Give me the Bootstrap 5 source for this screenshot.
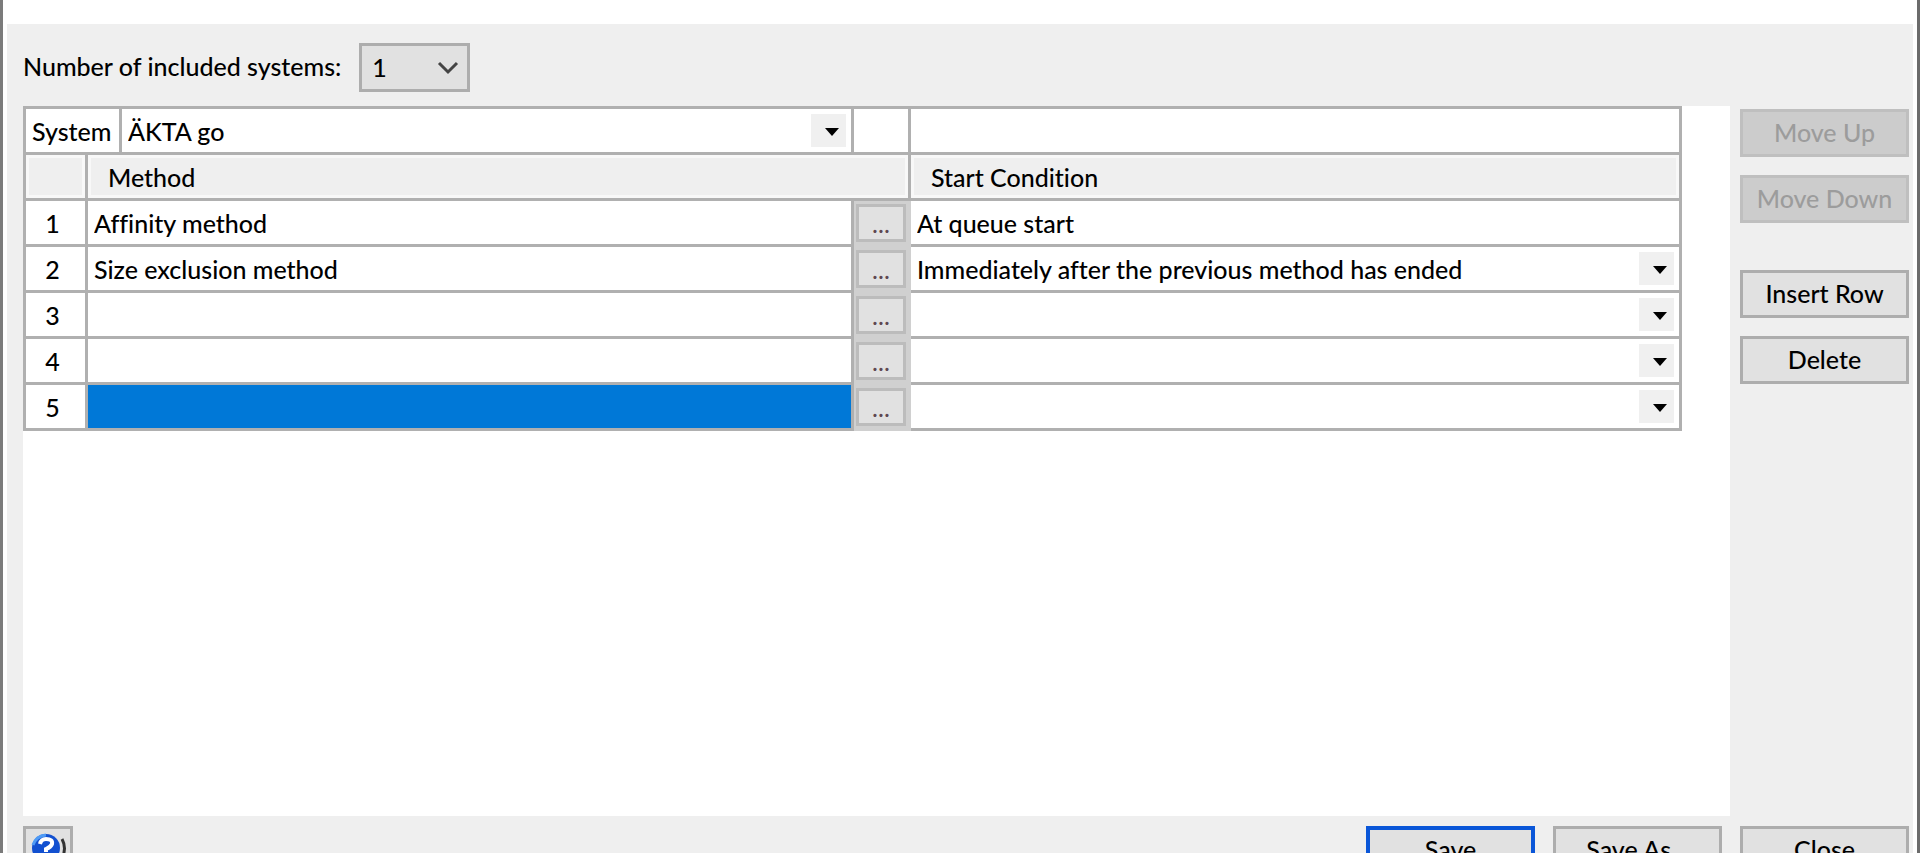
<!DOCTYPE html>
<html lang="en">
<head>
<meta charset="utf-8">
<meta name="viewport" content="width=device-width, initial-scale=1">
<title>Method queue</title>
<link href="https://cdn.jsdelivr.net/npm/bootstrap@5.3.0/dist/css/bootstrap.min.css" rel="stylesheet">
<style>
  body { font-family: Lato, "Liberation Sans", sans-serif; font-size: 25px; font-weight: 500; line-height: 32px; font-variant-ligatures: none; color: #000; background: #fff; overflow: hidden; }
  input, select, button { font-variant-ligatures: inherit; }
  .shell { min-height: calc(100vh + 21px); border-left: 3px solid #7b7b7b; border-right: 3px solid #6b6b6b; padding: 0 4px; }
  .titlebar { height: 24px; }
  .client { background: #efefef; padding: 19px 4px 0 16px; }
  .count-row { gap: 18px; margin-bottom: 14px; }
  .win-btn { height: 48px; width: 169px; padding: 0 0 2px; font-size: inherit; font-weight: inherit; line-height: 32px; color: #000; background: #e1e1e1; border: 3px solid #adadad; border-radius: 0; }
  .win-btn:disabled { color: #9c9c9c; background: #ccc; border-color: #bfbfbf; opacity: 1; }
  .win-btn.default-action { border: 4px solid #0a56d8; }
  .help-btn { width: 50px; }
  .btn-set { gap: 18px; }
  .side-set { margin-left: 10px; padding-top: 3px; }
  .edit-set { margin-top: 29px; }
  .count-select { width: 111px; height: 49px; padding: 0 10px; font-size: inherit; font-weight: inherit; color: #000; border: 3px solid #adadad; border-radius: 0;
    background: #e1e1e1 url("data:image/svg+xml,%3Csvg xmlns='http://www.w3.org/2000/svg' width='22' height='14'%3E%3Cpath d='M2 2l9 9 9-9' fill='none' stroke='%23444' stroke-width='3'/%3E%3C/svg%3E") no-repeat right 8px center / 22px 14px; }
  .panel { background: #fff; padding-right: 48px; }
  .grid-table { table-layout: fixed; width: 100%; border-collapse: collapse; }
  .grid-table th, .grid-table td { height: 46px; padding: 0; border: 3px solid #b0b0b0; font-weight: inherit; vertical-align: middle; }
  .grid-table .head th { background: #efefef; box-shadow: inset 0 0 0 3px #f8f8f8; padding: 0 0 0 20px; }
  .grid-table .row-no { text-align: center; padding: 0 6px 0 0; }
  .grid-table .sys-head { padding: 0 0 0 6px; }
  .c-num { width: 62px; } .c-sys { width: 34px; } .c-method { width: 44.2%; } .c-more { width: 57px; }
  .cell-field { display: block; width: 100%; height: 43px; padding: 0 6px; border: 0; border-radius: 0; font-size: inherit; font-weight: inherit; line-height: 32px; color: #000; background-color: transparent; appearance: none; }
  .cell-select { background: url("data:image/svg+xml,%3Csvg xmlns='http://www.w3.org/2000/svg' width='35' height='33'%3E%3Cpath fill='%23f0f0f0' d='M0 0h35v33H0z'/%3E%3Cpath d='M14 14h14l-7 8z'/%3E%3C/svg%3E") no-repeat right 5px center / 35px 33px; }
  .picked { background: #0078d7; }
  .grid-table td.more { background: #d0d0d0; border-color: #d0d0d0; }
  .more-btn { display: block; width: 50px; height: 38px; margin: 0 auto; padding: 0; border: 3px solid #bcbcbc; background: #e1e1e1; color: #5d4850; line-height: 32px; }
  .footer-row { padding-top: 10px; }
</style>
</head>
<body>
<div class="shell d-flex flex-column">
  <header class="titlebar"></header>
  <main class="client flex-grow-1 d-flex flex-column">
    <div class="count-row d-flex align-items-center">
      <label for="count" class="pb-1">Number of included systems:</label>
      <select id="count" class="count-select form-select"><option>1</option><option>2</option></select>
    </div>
    <div class="d-flex flex-grow-1">
      <section class="panel flex-grow-1">
        <table class="grid-table">
          <colgroup><col class="c-num"><col class="c-sys"><col class="c-method"><col class="c-more"><col></colgroup>
          <tbody>
            <tr><th colspan="2" class="sys-head"><label for="system">System</label></th><td><select id="system" class="cell-field cell-select"><option>ÄKTA go</option></select></td><td></td><td></td></tr>
            <tr class="head"><th></th><th colspan="3">Method</th><th>Start Condition</th></tr>
            <tr><th class="row-no">1</th><td colspan="2"><input class="cell-field" aria-label="Method 1" value="Affinity method"></td><td class="more"><button class="more-btn" type="button">...</button></td><td><input class="cell-field" aria-label="Start condition 1" value="At queue start" readonly></td></tr>
            <tr><th class="row-no">2</th><td colspan="2"><input class="cell-field" aria-label="Method 2" value="Size exclusion method"></td><td class="more"><button class="more-btn" type="button">...</button></td><td><select class="cell-field cell-select" aria-label="Start condition 2"><option>Immediately after the previous method has ended</option></select></td></tr>
            <tr><th class="row-no">3</th><td colspan="2"><input class="cell-field" aria-label="Method 3"></td><td class="more"><button class="more-btn" type="button">...</button></td><td><select class="cell-field cell-select" aria-label="Start condition 3"><option></option></select></td></tr>
            <tr><th class="row-no">4</th><td colspan="2"><input class="cell-field" aria-label="Method 4"></td><td class="more"><button class="more-btn" type="button">...</button></td><td><select class="cell-field cell-select" aria-label="Start condition 4"><option></option></select></td></tr>
            <tr><th class="row-no">5</th><td colspan="2" class="picked"><input class="cell-field" aria-label="Method 5"></td><td class="more"><button class="more-btn" type="button">...</button></td><td><select class="cell-field cell-select" aria-label="Start condition 5"><option></option></select></td></tr>
          </tbody>
        </table>
      </section>
      <aside class="btn-set side-set d-flex flex-column">
        <button class="btn win-btn" type="button" disabled>Move Up</button>
        <button class="btn win-btn" type="button" disabled>Move Down</button>
        <button class="btn win-btn edit-set" type="button">Insert Row</button>
        <button class="btn win-btn" type="button">Delete</button>
      </aside>
    </div>
    <footer class="footer-row d-flex">
      <button class="btn win-btn help-btn me-auto" type="button" aria-label="Help">
        <svg class="d-block mx-auto" width="40" height="36" viewBox="0 0 40 36" aria-hidden="true"><circle cx="18" cy="17" r="14" fill="#1250d0"/><path d="M5 14q3-9 13-10" fill="none" stroke="#4f9bf5" stroke-width="3"/><path d="M12 13q1-5 6-5 7 0 6 5-1 3-6 5v3m0 3v3" fill="none" stroke="#fff" stroke-width="4"/><path d="M34 8q5 9 0 20" fill="none" stroke="#333" stroke-width="3"/></svg>
      </button>
      <div class="btn-set d-flex">
        <button class="btn win-btn default-action" type="button">Save</button>
        <button class="btn win-btn" type="button">Save As...</button>
        <button class="btn win-btn" type="button">Close</button>
      </div>
    </footer>
  </main>
</div>
<script src="https://cdn.jsdelivr.net/npm/bootstrap@5.3.0/dist/js/bootstrap.bundle.min.js"></script>
</body>
</html>
